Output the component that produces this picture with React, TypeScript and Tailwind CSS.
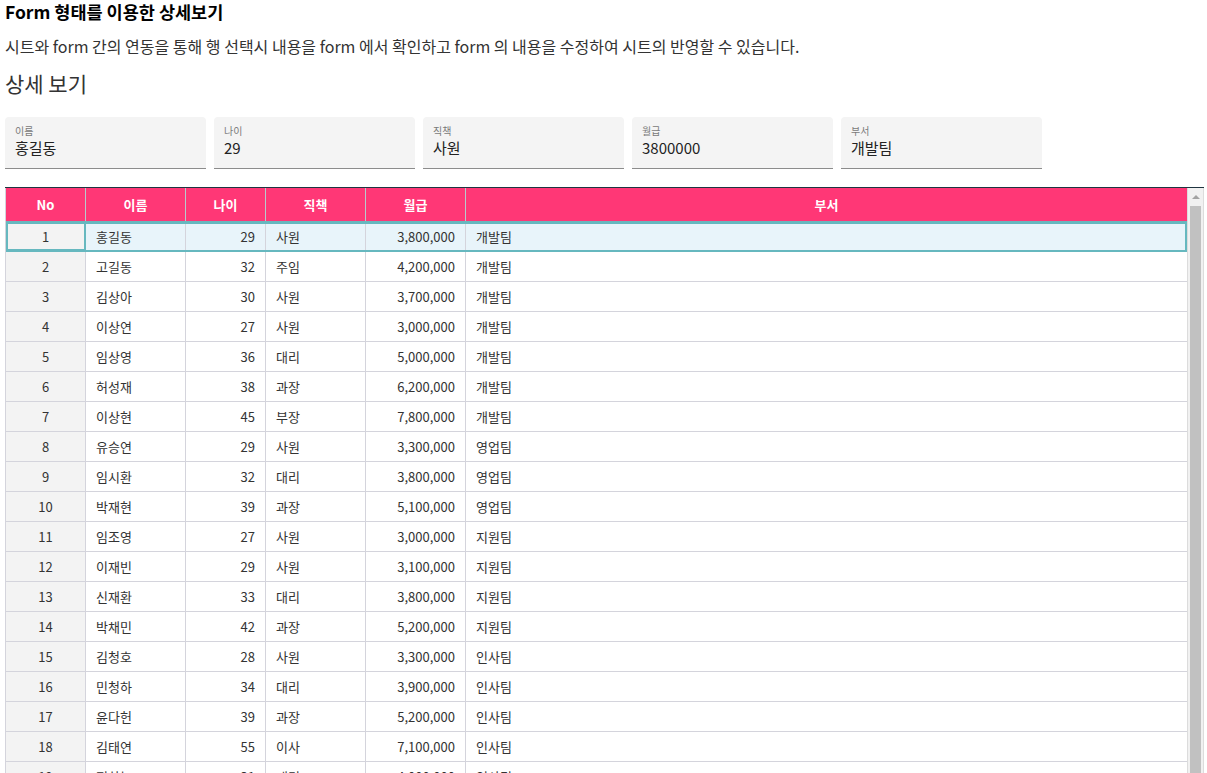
import React from "react";

type Row = {
  no: number;
  name: string;
  age: number;
  title: string;
  salary: number;
  dept: string;
};

const rows: Row[] = [
  { no: 1, name: "홍길동", age: 29, title: "사원", salary: 3800000, dept: "개발팀" },
  { no: 2, name: "고길동", age: 32, title: "주임", salary: 4200000, dept: "개발팀" },
  { no: 3, name: "김상아", age: 30, title: "사원", salary: 3700000, dept: "개발팀" },
  { no: 4, name: "이상연", age: 27, title: "사원", salary: 3000000, dept: "개발팀" },
  { no: 5, name: "임상영", age: 36, title: "대리", salary: 5000000, dept: "개발팀" },
  { no: 6, name: "허성재", age: 38, title: "과장", salary: 6200000, dept: "개발팀" },
  { no: 7, name: "이상현", age: 45, title: "부장", salary: 7800000, dept: "개발팀" },
  { no: 8, name: "유승연", age: 29, title: "사원", salary: 3300000, dept: "영업팀" },
  { no: 9, name: "임시환", age: 32, title: "대리", salary: 3800000, dept: "영업팀" },
  { no: 10, name: "박재현", age: 39, title: "과장", salary: 5100000, dept: "영업팀" },
  { no: 11, name: "임조영", age: 27, title: "사원", salary: 3000000, dept: "지원팀" },
  { no: 12, name: "이재빈", age: 29, title: "사원", salary: 3100000, dept: "지원팀" },
  { no: 13, name: "신재환", age: 33, title: "대리", salary: 3800000, dept: "지원팀" },
  { no: 14, name: "박채민", age: 42, title: "과장", salary: 5200000, dept: "지원팀" },
  { no: 15, name: "김청호", age: 28, title: "사원", salary: 3300000, dept: "인사팀" },
  { no: 16, name: "민청하", age: 34, title: "대리", salary: 3900000, dept: "인사팀" },
  { no: 17, name: "윤다헌", age: 39, title: "과장", salary: 5200000, dept: "인사팀" },
  { no: 18, name: "김태연", age: 55, title: "이사", salary: 7100000, dept: "인사팀" },
  { no: 19, name: "정하늘", age: 31, title: "대리", salary: 4000000, dept: "인사팀" },
];

const fields = [
  { label: "이름", value: "홍길동" },
  { label: "나이", value: "29" },
  { label: "직책", value: "사원" },
  { label: "월급", value: "3800000" },
  { label: "부서", value: "개발팀" },
];

const font = "font-['Noto_Sans_CJK_KR','Noto_Sans',sans-serif]";

function FormField({ label, value }: { label: string; value: string }) {
  return (
    <div className="flex h-[52px] w-[201px] flex-col rounded-t-[4px] border-b border-[#8c8c8c] bg-[#f4f4f4] pl-[10px] pt-[7px]">
      <span className="text-[10px] leading-[14px] text-[#7a7a7a]">{label}</span>
      <span className="text-[15px] leading-[20px] text-[#222]">{value}</span>
    </div>
  );
}

export default function App() {
  return (
    <div className={`${font} h-[773px] overflow-hidden bg-white pl-[5px] pr-[3px] text-[#333]`}>
      <h1 className="text-[17.5px] font-bold leading-[24px] text-black">Form 형태를 이용한 상세보기</h1>
      <p className="mt-[10px] text-[16px] leading-[24px] text-[#333]">
        시트와 form 간의 연동을 통해 행 선택시 내용을 form 에서 확인하고 form 의 내용을 수정하여 시트의 반영할 수 있습니다.
      </p>
      <h2 className="mt-[11px] text-[21px] font-normal leading-[28px] text-[#333]">상세 보기</h2>

      {/* FORM */}
      <div className="mt-[20px] flex gap-[8px]">
        {fields.map((f) => (
          <FormField key={f.label} label={f.label} value={f.value} />
        ))}
      </div>

      {/* SHEET */}
      <div className="mt-[18px] flex border-t border-[#1f3440] text-[13px]">
        <div className="flex-1 border-l border-[#d4d4dc]">
          <div className="flex h-[34px] border-b border-[#6bb5bd] bg-[#ff3776] font-bold text-white">
            {["No", "이름", "나이", "직책", "월급"].map((h, i) => (
              <div
                key={h}
                className={`flex items-center justify-center border-r border-[#b7c9cc] ${
                  i === 0 || i === 2 ? "w-[80px]" : "w-[100px]"
                }`}
              >
                {h}
              </div>
            ))}
            <div className="flex flex-1 items-center justify-center">부서</div>
          </div>

          {rows.map((r) => {
            const selected = r.no === 1;
            return (
              <div
                key={r.no}
                className={`relative flex h-[30px] border-b border-[#d4d4dc] ${
                  selected ? "bg-[#e8f4fa] outline-2 -outline-offset-2 outline-[#66b8bf]" : "bg-white"
                }`}
              >
                <div
                  className={`flex w-[80px] items-center justify-center border-r border-[#d4d4dc] bg-[#f3f3f3] ${
                    selected ? "outline-2 -outline-offset-2 outline-[#66b8bf]" : ""
                  }`}
                >
                  {r.no}
                </div>
                <div className="flex w-[100px] items-center border-r border-[#d4d4dc] pl-[10px]">{r.name}</div>
                <div className="flex w-[80px] items-center justify-end border-r border-[#d4d4dc] pr-[10px]">{r.age}</div>
                <div className="flex w-[100px] items-center border-r border-[#d4d4dc] pl-[10px]">{r.title}</div>
                <div className="flex w-[100px] items-center justify-end border-r border-[#d4d4dc] pr-[10px]">
                  {r.salary.toLocaleString("en-US")}
                </div>
                <div className="flex flex-1 items-center pl-[10px]">{r.dept}</div>
              </div>
            );
          })}
        </div>

        {/* SCROLLBAR */}
        <div className="flex w-[17px] flex-col border-x border-[#dcdcdc] bg-[#f1f1f1]">
          <div className="flex h-[18px] items-center justify-center">
            <div className="h-0 w-0 border-x-[4px] border-b-[4px] border-x-transparent border-b-[#a3a3a3]" />
          </div>
          <div className="mx-[2px] flex-1 bg-[#c1c1c1]" />
        </div>
      </div>
    </div>
  );
}
